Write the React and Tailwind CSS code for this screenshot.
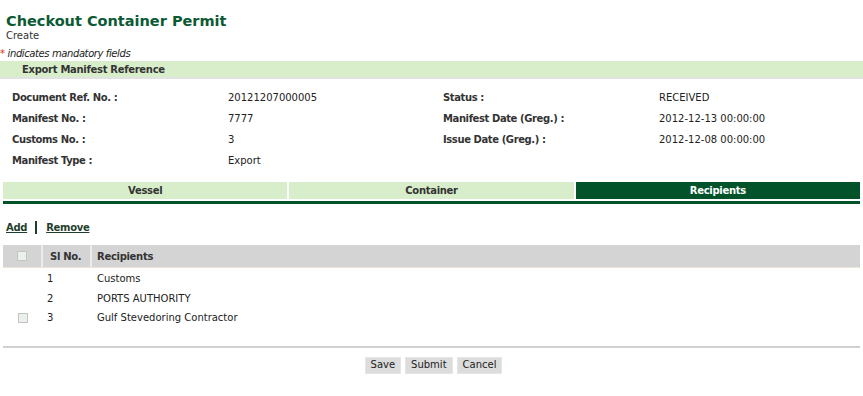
import React from "react";

const F = { fontFamily: '"DejaVu Sans", Verdana, sans-serif' };

function Field({ label, value }) {
  return (
    <div className="flex h-[21px] items-center">
      <div className="w-[216px] font-bold tracking-[-0.4px] text-[#333]">{label}</div>
      <div className="text-[#222]">{value}</div>
    </div>
  );
}

function Box() {
  return <span className="inline-block h-[10px] w-[10px] border border-[#c4c4c4] bg-[#eaf0ea]" />;
}

export default function App() {
  return (
    <div className="w-[863px] h-[396px] bg-white text-[10px] text-[#222]" style={F}>
      <div className="pl-[6px] pt-[13px]">
        <div className="text-[14.5px] font-bold leading-[17px] text-[#0b5a33]">Checkout Container Permit</div>
        <div className="leading-[12px] text-[#333]">Create</div>
      </div>
      <div className="mt-[4px] flex h-[14px] items-center italic tracking-[-0.4px] text-[#222]">
        <span className="mr-[3px] text-[#e03020] not-italic">*</span>indicates mandatory fields
      </div>
      <div className="mt-[1px] flex h-[18px] items-center border-b-2 border-[#e2e2e2] bg-[#d8eecb] pl-[22px] font-bold tracking-[-0.3px] text-[#333]">
        Export Manifest Reference
      </div>
      <div className="mt-[8px] flex pl-[12px]">
        <div className="w-[431px]">
          <Field label="Document Ref. No. :" value="20121207000005" />
          <Field label="Manifest No. :" value="7777" />
          <Field label="Customs No. :" value="3" />
          <Field label="Manifest Type :" value="Export" />
        </div>
        <div>
          <Field label="Status :" value="RECEIVED" />
          <Field label="Manifest Date (Greg.) :" value="2012-12-13 00:00:00" />
          <Field label="Issue Date (Greg.) :" value="2012-12-08 00:00:00" />
        </div>
      </div>
      <div className="mx-[3px] mt-[11px]">
        <div className="flex gap-[2px]">
          <div className="flex h-[17px] flex-1 items-center justify-center bg-[#d8eecb] font-bold tracking-[-0.3px] text-[#333]">Vessel</div>
          <div className="flex h-[17px] flex-1 items-center justify-center bg-[#d8eecb] font-bold tracking-[-0.3px] text-[#333]">Container</div>
          <div className="flex h-[17px] flex-1 items-center justify-center bg-[#03532a] font-bold tracking-[-0.3px] text-white">Recipients</div>
        </div>
        <div className="mt-[2px] h-[3px] bg-[#03532a]" />
      </div>
      <div className="mt-[16px] flex h-[14px] items-center pl-[6px] font-bold tracking-[-0.3px] text-[#1f3f2c]">
        <span className="underline">Add</span>
        <span className="ml-[8px] mr-[9px] h-[13px] w-[2px] bg-[#1f3f2c]" />
        <span className="underline">Remove</span>
      </div>
      <div className="mx-[3px] mt-[11px]">
        <div className="flex h-[23px] items-center border-b border-[#ece4d8] bg-[#d4d4d4] font-bold tracking-[-0.3px] text-[#333]">
          <div className="flex h-full w-[40px] items-center justify-center border-r-2 border-[#ececec]"><Box /></div>
          <div className="flex h-full w-[49px] items-center border-r-2 border-[#ececec] pl-[7px]">Sl No.</div>
          <div className="pl-[5px]">Recipients</div>
        </div>
        <div className="pt-[1px]">
          {[["1", "Customs", false], ["2", "PORTS AUTHORITY", false], ["3", "Gulf Stevedoring Contractor", true]].map(([n, r, cb]) => (
            <div key={n} className="flex h-[19.5px] items-center">
              <div className="flex w-[40px] justify-center">{cb ? <Box /> : null}</div>
              <div className="w-[49px] pl-[4px]">{n}</div>
              <div className="pl-[5px]">{r}</div>
            </div>
          ))}
        </div>
      </div>
      <div className="mx-[3px] mt-[18px] h-[2px] bg-[#d0d0d0]" />
      <div className="mt-[9px] flex justify-center gap-[4px] pl-[4px]">
        {["Save", "Submit", "Cancel"].map((b) => (
          <button key={b} className="h-[17px] border border-[#e6e6e6] bg-[#dcdcdc] px-[5px] text-[10px] leading-none text-[#222]" style={F}>
            {b}
          </button>
        ))}
      </div>
    </div>
  );
}
